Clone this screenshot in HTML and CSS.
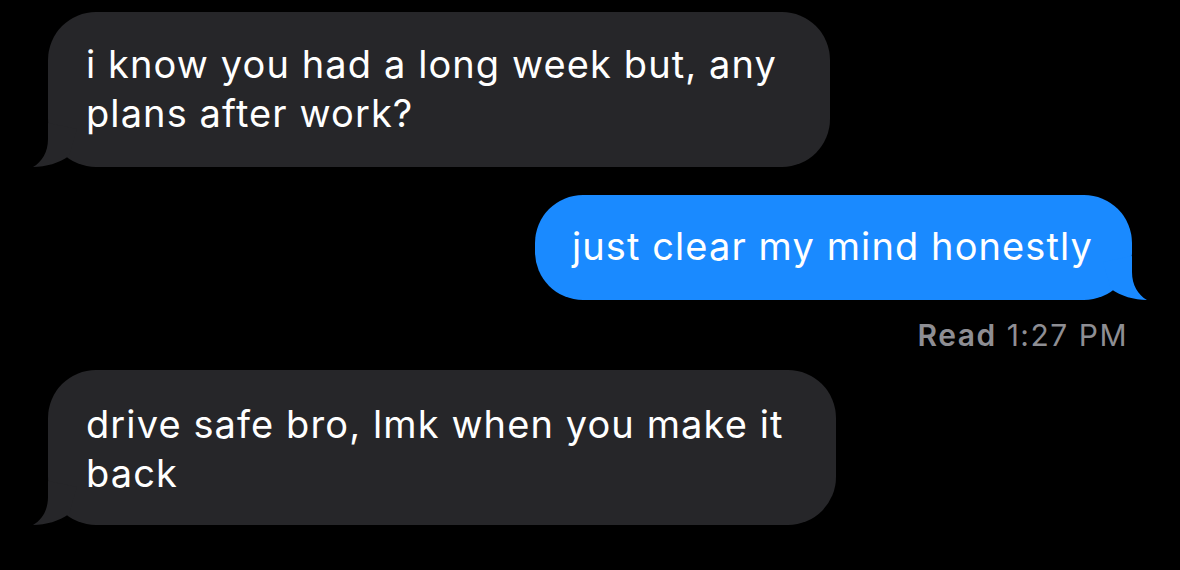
FILE: index.html
```html
<!DOCTYPE html>
<html>
<head>
<meta charset="utf-8">
<link rel="stylesheet" href="styles.css">
</head>
<body>
<div class="thread">
  <div class="row row-in">
    <div class="bubble bubble-in bubble-1">
      i know you had a long week but, any<br>plans after work?
      <svg class="tail tail-in" viewBox="0 0 60 50" width="60" height="50"><path d="M15,6 L15,22 C15,35 9,45 0,50 C13,50 26,46 36,39 L44,12 L15,6 Z"/></svg>
    </div>
  </div>
  <div class="row row-out">
    <div class="bubble bubble-out">
      just clear my mind honestly
      <svg class="tail tail-out" viewBox="0 0 60 50" width="60" height="50"><path d="M15,6 L15,22 C15,35 9,45 0,50 C13,50 26,46 36,39 L44,12 L15,6 Z"/></svg>
    </div>
  </div>
  <div class="status"><span class="status-label">Read</span> 1:27 PM</div>
  <div class="row row-in">
    <div class="bubble bubble-in bubble-3">
      drive safe bro, lmk when you make it<br>back
      <svg class="tail tail-in" viewBox="0 0 60 50" width="60" height="50"><path d="M15,6 L15,22 C15,35 9,45 0,50 C13,50 26,46 36,39 L44,12 L15,6 Z"/></svg>
    </div>
  </div>
</div>
</body>
</html>
```

FILE: styles.css
```css
html, body {
  margin: 0;
  padding: 0;
  background: #000;
}

body {
  width: 1180px;
  height: 570px;
  overflow: hidden;
  font-family: Inter, "Liberation Sans", Arial, sans-serif;
  -webkit-font-smoothing: antialiased;
}

.thread {
  display: flex;
  flex-direction: column;
  padding: 12px 48px 0 48px;
}

.row {
  display: flex;
}

.row-in {
  justify-content: flex-start;
}

.row-out {
  justify-content: flex-end;
  margin-top: 28px;
}

.bubble {
  position: relative;
  font-size: 38px;
  line-height: 49px;
  letter-spacing: 1.1px;
  color: #fff;
  border-radius: 48px;
  white-space: nowrap;
}

.bubble-in {
  background: #262629;
  padding: 28px 38px 29px 38px;
}

.bubble-1 {
  width: 706px;
}

.bubble-3 {
  width: 712px;
  margin-top: 17px;
  padding-top: 30px;
  padding-bottom: 27px;
}

.bubble-out {
  background: #1a8aff;
  padding: 27px 39px 29px 37px;
}

.tail {
  position: absolute;
  bottom: 0;
  overflow: visible;
}

.tail-in {
  left: -15px;
  fill: #262629;
}

.tail-out {
  right: -15px;
  fill: #1a8aff;
  transform: scaleX(-1);
}

.status {
  align-self: flex-end;
  margin-top: 17px;
  margin-right: 4px;
  font-size: 30px;
  line-height: 36px;
  letter-spacing: 1.5px;
  color: #8e8e93;
}

.status-label {
  font-weight: 600;
}
```
